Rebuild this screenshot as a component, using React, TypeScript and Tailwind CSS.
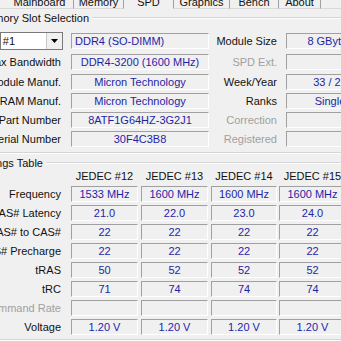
import React from 'react';

const blue = 'text-[#1f1fa6]';

function Field({ w, children, left = false }: { w: string; children?: React.ReactNode; left?: boolean }) {
  return (
    <div
      className={`${w} h-[16px] shrink-0 flex items-center whitespace-nowrap border-t border-l border-t-[#a0a0a0] border-l-[#a0a0a0] border-b border-r border-b-white border-r-white ${
        left ? 'justify-start pl-[3px]' : 'justify-center'
      } ${blue}`}
    >
      {children}
    </div>
  );
}

function Label({ w, children, muted = false }: { w: string; children: React.ReactNode; muted?: boolean }) {
  return (
    <div className={`${w} shrink-0 flex justify-end whitespace-nowrap ${muted ? 'text-[#a0a0a0]' : 'text-[#111]'}`}>
      {children}
    </div>
  );
}

function Legend({ w, children }: { w: string; children: React.ReactNode }) {
  return (
    <div className="flex items-center h-[12px]">
      <div className={`${w} shrink-0 flex justify-end whitespace-nowrap text-[#111]`}>{children}</div>
      <div className="flex-1 ml-[3px] h-[2px] border-t border-t-[#d5d5d5] border-b border-b-white" />
    </div>
  );
}

function Etch() {
  return <div className="h-[2px] border-t border-t-[#d5d5d5] border-b border-b-white" />;
}

const spdRows = [
  { label: 'Max Bandwidth', value: 'DDR4-3200 (1600 MHz)', rLabel: 'SPD Ext.', rMuted: true, rValue: '' },
  { label: 'Module Manuf.', value: 'Micron Technology', rLabel: 'Week/Year', rMuted: false, rValue: '33 / 21' },
  { label: 'DRAM Manuf.', value: 'Micron Technology', rLabel: 'Ranks', rMuted: false, rValue: 'Single' },
  { label: 'Part Number', value: '8ATF1G64HZ-3G2J1', rLabel: 'Correction', rMuted: true, rValue: '' },
  { label: 'Serial Number', value: '30F4C3B8', rLabel: 'Registered', rMuted: true, rValue: '' },
];
const rowGaps = ['mt-[4px]', 'mt-[4px]', 'mt-[3px]', 'mt-[3px]', 'mt-[3px]'];

const timings: { label: string; muted?: boolean; values: string[] }[] = [
  { label: 'Frequency', values: ['1533 MHz', '1600 MHz', '1600 MHz', '1600 MHz'] },
  { label: 'CAS# Latency', values: ['21.0', '22.0', '23.0', '24.0'] },
  { label: 'RAS# to CAS#', values: ['22', '22', '22', '22'] },
  { label: 'RAS# Precharge', values: ['22', '22', '22', '22'] },
  { label: 'tRAS', values: ['50', '52', '52', '52'] },
  { label: 'tRC', values: ['71', '74', '74', '74'] },
  { label: 'Command Rate', muted: true, values: ['', '', '', ''] },
  { label: 'Voltage', values: ['1.20 V', '1.20 V', '1.20 V', '1.20 V'] },
];
const colW = ['w-[67px]', 'w-[67px]', 'w-[66px]', 'w-[67px]'];
const colGap = ['ml-[10px]', 'ml-[3px]', 'ml-[3px]', 'ml-[2px]'];

const tabs = [
  { name: 'Mainboard', w: 'w-[74px] pl-[6px]' },
  { name: 'Memory', w: 'w-[50px]' },
  { name: 'SPD', w: 'w-[50px]', active: true },
  { name: 'Graphics', w: 'w-[56px]' },
  { name: 'Bench', w: 'w-[49px]' },
  { name: 'About', w: 'w-[42px]' },
];

export default function App() {
  return (
    <div className="w-[341px] h-[341px] overflow-hidden bg-[#f0f0f0] font-['Liberation_Sans',Arial,sans-serif] text-[11px] leading-[13px]">
      {/* Tab strip (top cut off) */}
      <div className="flex h-[21px] -mt-[12px]">
        {tabs.map((t) => (
          <div
            key={t.name}
            className={`${t.w} shrink-0 flex justify-center pt-[8px] whitespace-nowrap text-[#111] border-r border-r-[#a0a0a0] ${
              t.active ? 'border-b border-b-transparent' : 'border-b border-b-[#d9d9d9]'
            }`}
          >
            {t.name}
          </div>
        ))}
        <div className="flex-1 border-b border-b-[#d9d9d9]" />
      </div>

      {/* Memory Slot Selection */}
      <div className="mt-[3px]">
        <Legend w="w-[89px]">Memory Slot Selection</Legend>

        <div className="flex items-center h-[18px] mt-[8px]">
          <div className="w-[63px] h-[18px] shrink-0 flex bg-white border border-[#7a7a7a]">
            <div className="w-[14px] flex justify-end items-center whitespace-nowrap text-[#111]">Slot #1</div>
            <div className="flex-1" />
            <div className="w-[16px] flex items-center justify-center bg-[#f0f0f0] border-l border-l-[#c8c8c8]">
              <svg width="7" height="4" viewBox="0 0 7 4">
                <path d="M0 0h7L3.5 4z" fill="#000" />
              </svg>
            </div>
          </div>
          <div className="ml-[8px]" />
          <Field w="w-[138px]" left>
            DDR4 (SO-DIMM)
          </Field>
          <Label w="w-[68px]">Module Size</Label>
          <div className="ml-[9px]" />
          <Field w="w-[88px]">8 GBytes</Field>
        </div>

        {spdRows.map((r, i) => (
          <div key={r.label} className={`flex items-center h-[16px] ${rowGaps[i]}`}>
            <Label w="w-[61px]">{r.label}</Label>
            <div className="ml-[10px]" />
            <Field w="w-[138px]">{r.value}</Field>
            <Label w="w-[68px]" muted={r.rMuted}>
              {r.rLabel}
            </Label>
            <div className="ml-[9px]" />
            <Field w="w-[88px]">{r.rValue}</Field>
          </div>
        ))}

        <div className="mt-[5px]">
          <Etch />
        </div>
      </div>

      {/* Timings Table */}
      <div className="mt-[3px]">
        <Legend w="w-[43px]">Timings Table</Legend>

        <div className="flex items-center h-[12px] mt-[1px]">
          <div className="w-[61px] shrink-0" />
          {['JEDEC #12', 'JEDEC #13', 'JEDEC #14', 'JEDEC #15'].map((h, i) => (
            <div key={h} className={`${colW[i]} ${colGap[i]} shrink-0 flex justify-center whitespace-nowrap text-[#111]`}>
              {h}
            </div>
          ))}
        </div>

        <div className="flex flex-col gap-[3px] mt-[4px]">
          {timings.map((t) => (
            <div key={t.label} className="flex items-center h-[16px]">
              <Label w="w-[61px]" muted={t.muted}>
                {t.label}
              </Label>
              {t.values.map((v, i) => (
                <div key={i} className={`${colGap[i]} shrink-0`}>
                  <Field w={colW[i]}>{v}</Field>
                </div>
              ))}
            </div>
          ))}
        </div>

        <div className="mt-[4px]">
          <Etch />
        </div>
      </div>
    </div>
  );
}
